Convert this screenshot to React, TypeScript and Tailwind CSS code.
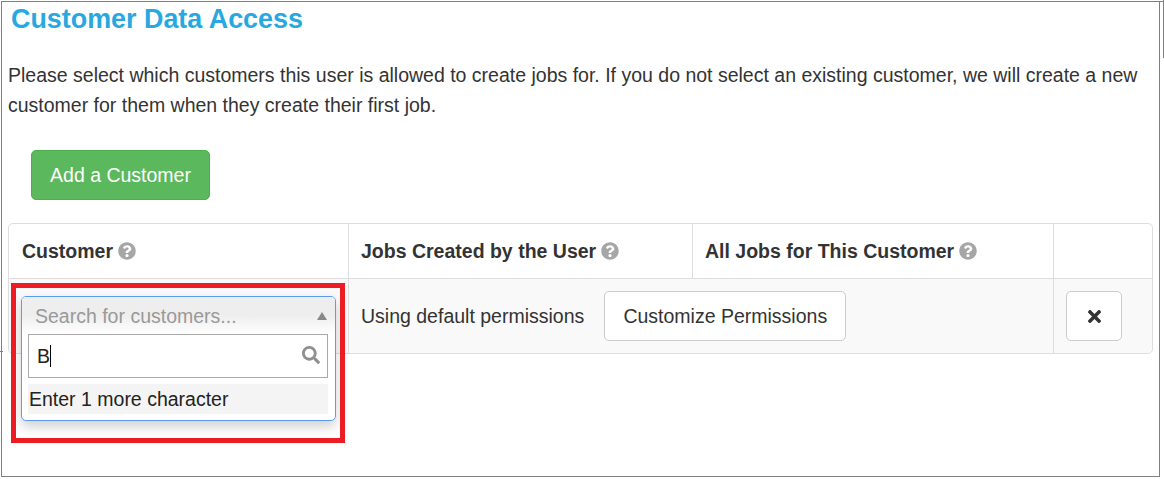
import { FaQuestionCircle, FaSearch, FaTimes } from "react-icons/fa";

function Help() {
  return <FaQuestionCircle className="ml-[5px] inline-block text-[18px] text-[#a6a6a6]" />;
}

export default function App() {
  return (
    <div className="relative h-[479px] w-[1164px] overflow-hidden bg-white font-['Liberation_Sans',Arial,sans-serif] text-[#333]">
      <div className="ml-px mt-px h-[476px] w-[1159px] border border-[#808080] pl-[6px] pt-[2px]">
        <h2 className="ml-[3px] h-[30px] text-[26.9px] font-bold leading-[30px] text-[#29a8e0]">Customer Data Access</h2>
        <p className="mt-[26px] w-[1140px] text-[19.5px] leading-[30px]">
          Please select which customers this user is allowed to create jobs for. If you do not select an existing customer, we will create a new customer for them when they create their first job.
        </p>
        <button className="ml-[23px] mt-[30px] block h-[50px] w-[179px] rounded-[5px] border border-[#4cae4c] bg-[#5cb85c] pt-[2px] text-[19.5px] text-white">
          Add a Customer
        </button>
        <div className="mt-[23px] w-[1145px] rounded-[5px] border border-[#ddd]">
          <div className="flex h-[55px] items-center border-b border-[#ddd] text-[19.5px] font-bold text-[#333]">
            <div className="flex h-full w-[340px] shrink-0 items-center border-r border-[#ddd] pl-[13px]"><span className="pt-px">Customer</span><Help /></div>
            <div className="flex h-full w-[344px] shrink-0 items-center border-r border-[#ddd] pl-[12px]"><span className="pt-px">Jobs Created by the User</span><Help /></div>
            <div className="flex h-full w-[361px] shrink-0 items-center border-r border-[#ddd] pl-[12px]"><span className="pt-px">All Jobs for This Customer</span><Help /></div>
            <div className="flex-1" />
          </div>
          <div className="flex h-[74px] items-center rounded-b-[5px] bg-[#f9f9f9] text-[19.5px]">
            <div className="h-full w-[340px] shrink-0 border-r border-[#ddd]" />
            <div className="flex h-full w-[705px] shrink-0 items-center border-r border-[#ddd] pl-[12px]">
              <span className="pt-px">Using default permissions</span>
              <button className="ml-[20px] h-[50px] w-[242px] rounded-[5px] border border-[#ccc] bg-white pt-px text-[19.5px] text-[#333]">Customize Permissions</button>
            </div>
            <div className="flex flex-1 items-center pl-[12px]">
              <button className="flex h-[50px] w-[56px] items-center justify-center rounded-[5px] border border-[#ccc] bg-white">
                <FaTimes className="text-[19px] text-[#333]" />
              </button>
            </div>
          </div>
        </div>
      </div>

      {/* open select dropdown */}
      <div className="absolute left-[21px] top-[296px] h-[125px] w-[315px] rounded-[5px] border border-[#5b9cf0] bg-white shadow-[0_6px_12px_rgba(0,0,0,0.175)]">
        <div className="flex h-[37px] items-center justify-between rounded-t-[4px] bg-gradient-to-b from-[#eeeeee] via-[#eeeeee] to-white pl-[13px] pr-[7px] text-[19.5px] text-[#999]">
          <span className="pt-[3px]">Search for customers...</span>
          <svg width="10" height="8" viewBox="0 0 10 8" className="mr-[1px]"><path d="M5 0 L10 8 L0 8 Z" fill="#888" /></svg>
        </div>
        <div className="ml-[6px] mr-[7px] flex h-[44px] items-center justify-between border border-[#aaa] bg-white pl-[8px] pr-[7px] text-[19.5px] text-[#222]">
          <span className="border-r border-black pr-0 leading-[22px]">B</span>
          <FaSearch className="mb-[3px] text-[18px] text-[#8f8f8f]" />
        </div>
        <div className="ml-[6px] mr-[7px] mt-[6px] flex h-[30px] items-center bg-[#f4f4f4] pl-px pt-px text-[19.5px] text-[#222]">Enter 1 more character</div>
      </div>

      {/* red annotation */}
      <div className="absolute left-[11px] top-[283px] h-[160px] w-[334px] border-[5px] border-[#ed1c24]" />
      <div className="absolute left-0 top-[351px] h-px w-[3px] bg-[#808080]" />
      <div className="absolute left-[1159px] top-px h-px w-[5px] bg-[#808080]" />
      <div className="absolute left-[1163px] top-0 h-[58px] w-px bg-[#808080]" />
    </div>
  );
}
